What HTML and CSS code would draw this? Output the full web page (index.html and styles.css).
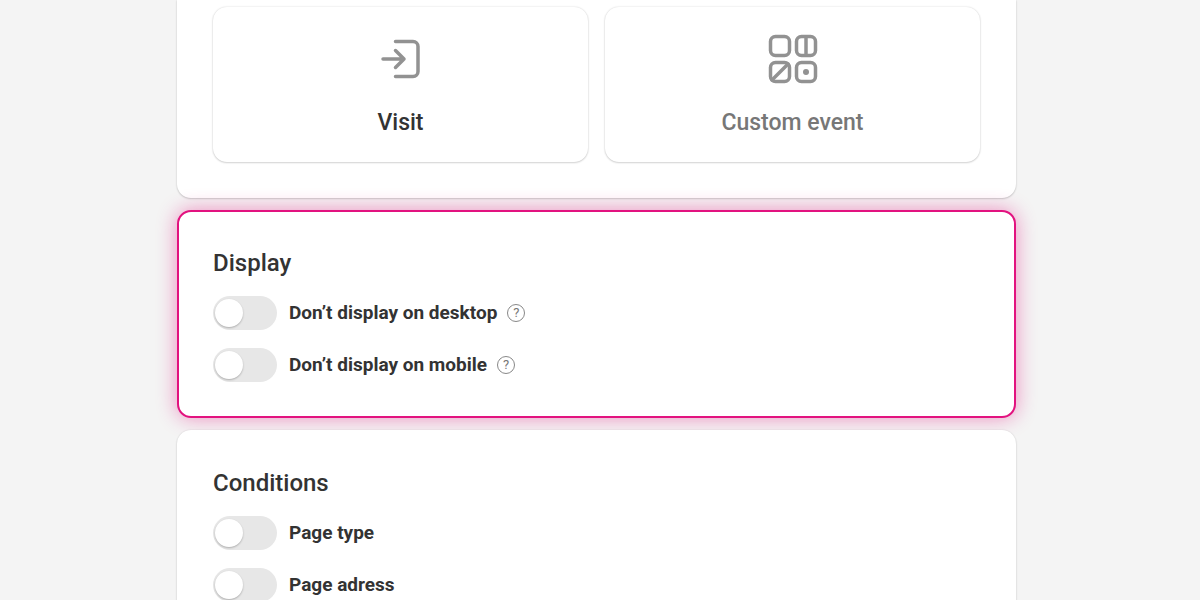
FILE: index.html
```html
<!DOCTYPE html>
<html lang="en">
<head>
    <meta charset="UTF-8">
    <meta name="viewport" content="width=device-width, initial-scale=1.0">
    <title>Campaign settings</title>
    <link rel="stylesheet" href="styles.css">
</head>
<body>
    <main class="container">
        <section class="panel panel-trigger">
            <button type="button" class="choice choice-active">
                <svg class="choice-icon" viewBox="0 0 48 48" aria-hidden="true">
                    <path d="M18.500 6.500H36a5 5 0 0 1 5 5v25a5 5 0 0 1-5 5H18.500M6 24H27M18.500 15.500L27 24L18.500 32.500"/>
                </svg>
                <span>Visit</span>
            </button>
            <button type="button" class="choice">
                <svg class="choice-icon" viewBox="0 0 48 48" aria-hidden="true">
                    <rect x="1.500" y="1.500" width="19" height="19" rx="5"/>
                    <rect x="27.500" y="1.500" width="19" height="19" rx="5"/>
                    <rect x="1.500" y="27.500" width="19" height="19" rx="5"/>
                    <rect x="27.500" y="27.500" width="19" height="19" rx="5"/>
                    <path d="M37 2V20M3 45L19 29"/>
                    <circle class="dot" cx="37" cy="37" r="3"/>
                </svg>
                <span>Custom event</span>
            </button>
        </section>

        <section class="panel panel-highlight">
            <h2>Display</h2>
            <div class="toggle-row">
                <input type="checkbox" class="toggle" id="hideDesktop">
                <label for="hideDesktop">Don’t display on desktop</label>
                <button type="button" class="help" aria-label="Help">?</button>
            </div>
            <div class="toggle-row">
                <input type="checkbox" class="toggle" id="hideMobile">
                <label for="hideMobile">Don’t display on mobile</label>
                <button type="button" class="help" aria-label="Help">?</button>
            </div>
        </section>

        <section class="panel">
            <h2>Conditions</h2>
            <div class="toggle-row">
                <input type="checkbox" class="toggle" id="pageType">
                <label for="pageType">Page type</label>
            </div>
            <div class="toggle-row">
                <input type="checkbox" class="toggle" id="pageAdress">
                <label for="pageAdress">Page adress</label>
            </div>
        </section>
    </main>
</body>
</html>
```
FILE: styles.css
```css
* {
    box-sizing: border-box;
}

body {
    margin: 0;
    padding: 0 7px 0 0;
    background-color: #f4f4f4;
    color: #333;
    font-family: Roboto, sans-serif;
}

.container {
    display: flex;
    flex-direction: column;
    gap: 12px;
    max-width: 839px;
    margin: 0 auto;
}

.panel {
    position: relative;
    padding: 36px;
    background-color: #fff;
    border-radius: 14px;
    box-shadow: 0 0 2px rgba(0, 0, 0, 0.1), 0 1px 2px rgba(0, 0, 0, 0.16);
}

/* Trigger choices */
.panel-trigger {
    display: grid;
    grid-template-columns: 1fr 1fr;
    gap: 17px;
    padding-top: 7px;
    border-radius: 0 0 14px 14px;
}

.choice {
    display: flex;
    flex-direction: column;
    align-items: center;
    gap: 23px;
    padding: 28px 12px 22px;
    background-color: #fff;
    border: none;
    border-radius: 14px;
    box-shadow: 0 0 2px rgba(0, 0, 0, 0.16), 0 1px 2px rgba(0, 0, 0, 0.14);
    color: #777;
    font-family: inherit;
    font-size: 23px;
    font-weight: 500;
    line-height: 34px;
    cursor: pointer;
}

.choice-active {
    color: #333;
}

.choice-icon {
    width: 48px;
    height: 48px;
    fill: none;
    stroke: #929292;
    stroke-width: 3.500;
    stroke-linecap: round;
    stroke-linejoin: round;
    overflow: visible;
}

.choice-icon .dot {
    fill: #929292;
    stroke: none;
}

/* Toggle panels */
.panel-highlight {
    padding: 34px;
    border: 2px solid #e2127f;
    box-shadow: 0 0 20px rgba(226, 18, 127, 0.45);
}

h2 {
    margin: 0 0 16px;
    font-size: 24px;
    font-weight: 500;
    line-height: 34px;
}

.toggle-row {
    display: flex;
    align-items: center;
    color: #333;
    font-size: 19px;
    font-weight: 700;
    line-height: 34px;
}

.toggle-row + .toggle-row {
    margin-top: 18px;
}

.toggle {
    appearance: none;
    flex-shrink: 0;
    width: 64px;
    height: 34px;
    margin: 0 12px 0 0;
    padding: 3px 2px;
    background-color: #e7e7e7;
    border-radius: 17px;
    cursor: pointer;
}

.toggle::before {
    content: "";
    display: block;
    width: 28px;
    height: 28px;
    background-color: #fff;
    border-radius: 50%;
    box-shadow: 0 1px 2px rgba(0, 0, 0, 0.25);
    transition: transform 0.2s ease;
}

.toggle:checked {
    background-color: #e2127f;
}

.toggle:checked::before {
    transform: translateX(32px);
}

.help {
    width: 18px;
    height: 18px;
    margin-left: 10px;
    padding: 0;
    background: none;
    border: 1px solid #888;
    border-radius: 50%;
    color: #777;
    font-family: inherit;
    font-size: 13px;
    font-weight: 400;
    line-height: 16px;
    text-align: center;
    cursor: pointer;
}
```
